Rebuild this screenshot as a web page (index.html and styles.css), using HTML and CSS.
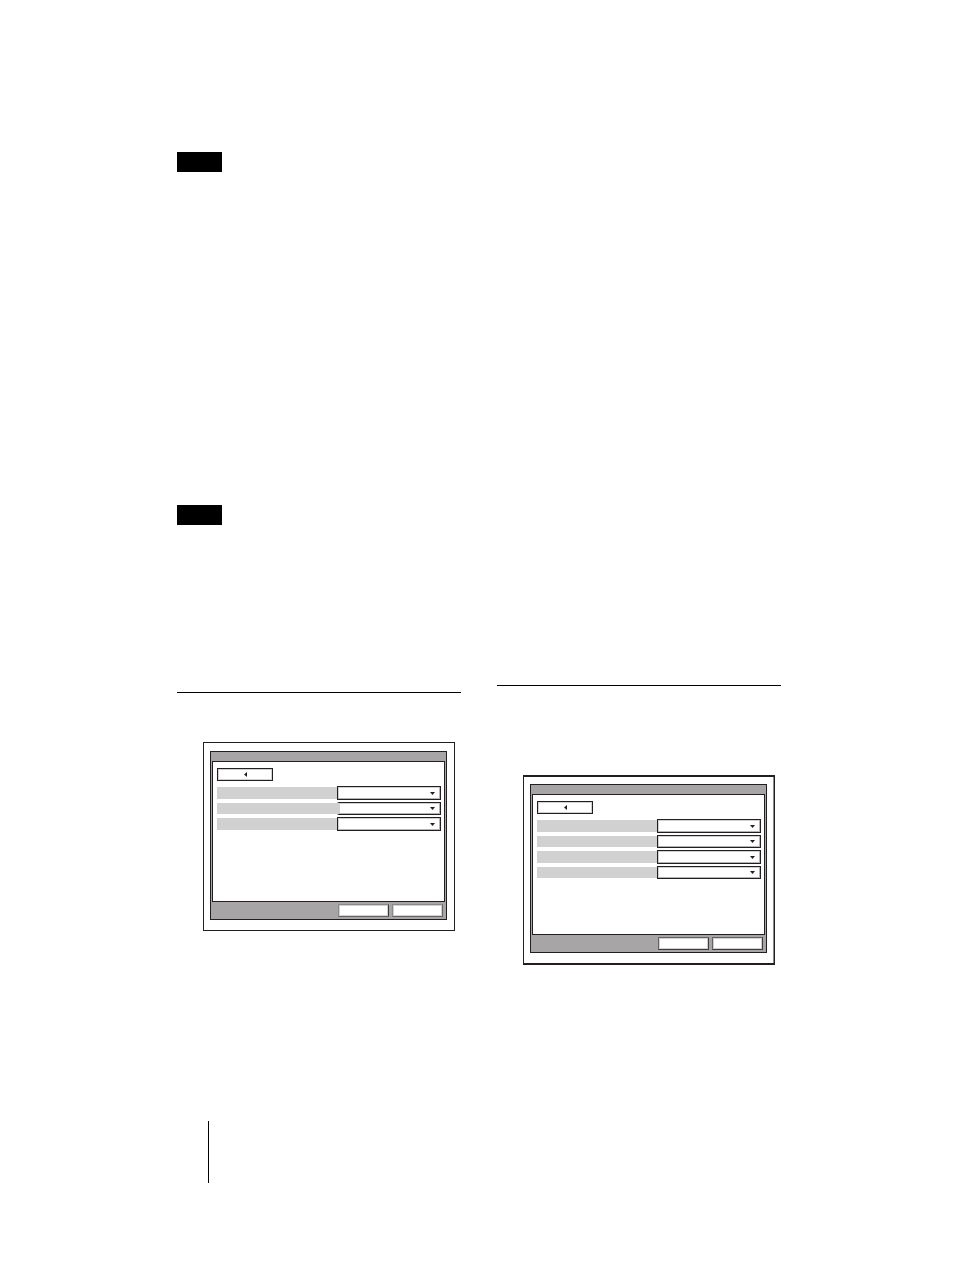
FILE: index.html
```html
<!DOCTYPE html>
<html lang="en">

<head>
    <meta charset="UTF-8">
    <meta name="viewport" content="width=device-width, initial-scale=1.0">
    <title>Setup</title>
    <link rel="stylesheet" href="styles.css">
</head>

<body>

    <main class="columns">
        <div class="column">
            <div class="note"></div>
            <div class="note"></div>

            <section class="topic">
                <div class="screen">
                    <form class="panel">
                        <div class="titlebar"></div>
                        <div class="content">
                            <button type="button" class="back" aria-label="Back">
                                <svg width="3" height="5" viewBox="0 0 3 5"><path d="M3 0v5L0 2.5z"/></svg>
                            </button>
                            <div class="row">
                                <label for="a1"></label>
                                <div class="select">
                                    <select id="a1"></select>
                                    <svg width="5" height="3" viewBox="0 0 5 3"><path d="M0 0h5L2.5 3z"/></svg>
                                </div>
                            </div>
                            <div class="row open">
                                <label for="a2"></label>
                                <div class="select">
                                    <select id="a2"></select>
                                    <svg width="5" height="3" viewBox="0 0 5 3"><path d="M0 0h5L2.5 3z"/></svg>
                                </div>
                            </div>
                            <div class="row">
                                <label for="a3"></label>
                                <div class="select">
                                    <select id="a3"></select>
                                    <svg width="5" height="3" viewBox="0 0 5 3"><path d="M0 0h5L2.5 3z"/></svg>
                                </div>
                            </div>
                        </div>
                        <div class="actions">
                            <button type="button" class="dark" aria-label="OK"></button>
                            <button type="button" aria-label="Cancel"></button>
                        </div>
                    </form>
                </div>
            </section>
        </div>

        <div class="column second">
            <section class="topic">
                <div class="screen">
                    <form class="panel">
                        <div class="titlebar"></div>
                        <div class="content">
                            <button type="button" class="back" aria-label="Back">
                                <svg width="3" height="5" viewBox="0 0 3 5"><path d="M3 0v5L0 2.5z"/></svg>
                            </button>
                            <div class="row">
                                <label for="b1"></label>
                                <div class="select">
                                    <select id="b1"></select>
                                    <svg width="5" height="3" viewBox="0 0 5 3"><path d="M0 0h5L2.5 3z"/></svg>
                                </div>
                            </div>
                            <div class="row">
                                <label for="b2"></label>
                                <div class="select">
                                    <select id="b2"></select>
                                    <svg width="5" height="3" viewBox="0 0 5 3"><path d="M0 0h5L2.5 3z"/></svg>
                                </div>
                            </div>
                            <div class="row">
                                <label for="b3"></label>
                                <div class="select">
                                    <select id="b3"></select>
                                    <svg width="5" height="3" viewBox="0 0 5 3"><path d="M0 0h5L2.5 3z"/></svg>
                                </div>
                            </div>
                            <div class="row">
                                <label for="b4"></label>
                                <div class="select">
                                    <select id="b4"></select>
                                    <svg width="5" height="3" viewBox="0 0 5 3"><path d="M0 0h5L2.5 3z"/></svg>
                                </div>
                            </div>
                        </div>
                        <div class="actions">
                            <button type="button" class="dark" aria-label="OK"></button>
                            <button type="button" aria-label="Cancel"></button>
                        </div>
                    </form>
                </div>
            </section>
        </div>
    </main>

    <footer></footer>

</body>

</html>
```
FILE: styles.css
```css
* {
    box-sizing: border-box;
}

body {
    margin: 0;
    padding: 152px 173px 86px 177px;
    background-color: #fff;
    font-family: "Liberation Sans", Arial, sans-serif;
    font-size: 10px;
}

.columns {
    display: grid;
    grid-template-columns: 1fr 1fr;
    gap: 36px;
}

.note {
    width: 45px;
    height: 20px;
    margin-bottom: 333px;
    background-color: #000;
}

.note + .note {
    margin-bottom: 167px;
}

.topic {
    padding: 49px 6px 0 26px;
    border-top: 1px solid #000;
}

.second .topic {
    margin-top: 533px;
    padding-top: 89px;
}

/* Device screen */
.screen {
    padding: 8px 7px 10px 6px;
    border: 1px solid #231f20;
}

.second .screen {
    padding-top: 7px;
    border-width: 2px 1px;
    box-shadow: inset -1px 0 #8a8888;
}

.panel {
    padding: 0 1px;
    border: 1px solid #231f20;
    background-color: #a7a5a6;
}

.titlebar {
    height: 9px;
}

.content {
    display: flex;
    flex-direction: column;
    gap: 2px;
    min-height: 141px;
    padding: 6px 3px 6px 4px;
    border: 1px solid #231f20;
    background-color: #fff;
}

button {
    padding: 0;
    border-radius: 0;
    background-color: #fff;
}

.back {
    display: flex;
    align-items: center;
    justify-content: center;
    width: 56px;
    height: 13px;
    margin-bottom: 3px;
    border: 1px solid #231f20;
    box-shadow: inset 0 0 0 1px #d1d1d1;
}

svg {
    display: block;
    fill: #231f20;
}

.row {
    display: flex;
    height: 13px;
}

/* .back is the first child, so this is the first and third row */
.row:nth-child(even) {
    height: 14px;
}

.row label {
    flex: 0 0 120px;
    margin: 1px 0;
    background-color: #d1d1d1;
}

.select {
    position: relative;
    flex: 1;
}

.select svg {
    position: absolute;
    top: 6px;
    right: 6px;
}

.row:nth-child(odd) .select svg {
    top: 5px;
}

select {
    display: block;
    width: 100%;
    height: 100%;
    padding: 0;
    border: 1px solid #231f20;
    border-radius: 0;
    background-color: #fff;
    box-shadow: inset -1px -1px #b5b4b4, inset 1px 1px #d1d1d1;
    appearance: none;
}

.open select {
    border-left: 2px solid #d1d1d1;
}

.actions {
    display: flex;
    justify-content: flex-end;
    gap: 3px;
    padding: 2px;
}

.actions button {
    width: 51px;
    height: 13px;
    border: 1px solid;
    border-color: #8a8888 #656263 #656263 #8a8888;
    box-shadow: inset 0 0 0 1px #d1d1d1;
}

.actions .dark {
    border-right-color: #3f3b3c;
}

.second .actions button {
    border-color: #656263 #3f3b3c #3f3b3c #656263;
}

footer {
    height: 62px;
    margin: 156px 0 0 31px;
    border-left: 1px solid #000;
}
```
